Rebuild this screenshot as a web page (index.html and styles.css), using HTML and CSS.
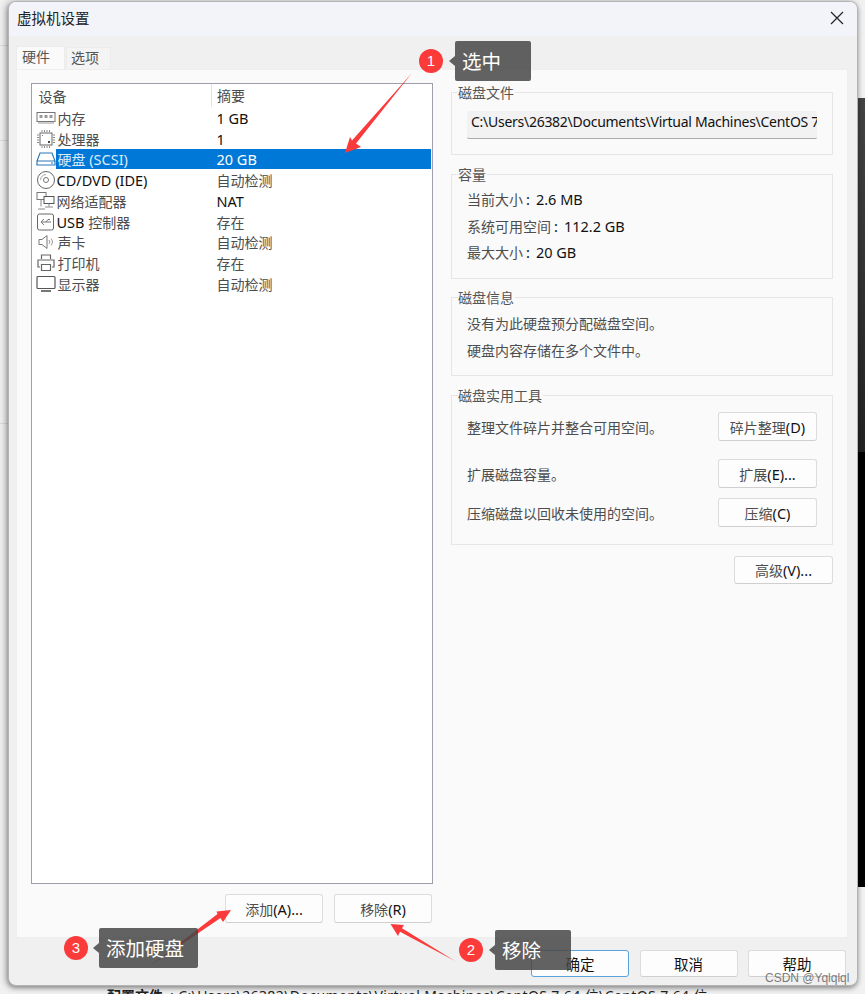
FILE: index.html
```html
<!DOCTYPE html>
<html lang="zh-CN">
<head>
<meta charset="utf-8">
<title>虚拟机设置</title>
<link rel="stylesheet" href="styles.css">
</head>
<body>
<div class="backdrop">
  <i class="bd-line bd-line-a"></i><i class="bd-line bd-line-b"></i><i class="bd-line bd-line-c"></i>
  <div class="bd-dark"></div>
  <div class="bd-text"><b>配置文件</b>: C:\Users\26382\Documents\Virtual Machines\CentOS 7 64 位\CentOS 7 64 位</div>
</div>

<div class="window">
  <header class="titlebar">
    <span class="title">虚拟机设置</span>
    <svg class="close" width="14" height="14" viewBox="0 0 14 14"><path d="M1 1l12 12M13 1L1 13" stroke="#222" stroke-width="1.2" fill="none"/></svg>
  </header>
  <nav class="tabs">
    <span class="tab tab-on">硬件</span>
    <span class="tab">选项</span>
  </nav>
  <main class="panel">
    <section class="left">
      <div class="list">
        <div class="row head"><span class="c1 hd1">设备</span><span class="c2 hd2">摘要</span></div>
        <div class="row">
          <svg class="ico" viewBox="0 0 20 16"><rect x="1" y="2.5" width="18" height="9" fill="none" stroke="#777"/><path d="M3.5 5h3v3h-3zM8.5 5h3v3h-3zM13.5 5h3v3h-3z" fill="#999"/><path d="M2 13h16" stroke="#999"/></svg>
          <span class="c1 zh">内存</span><span class="c2">1 GB</span>
        </div>
        <div class="row">
          <svg class="ico" viewBox="0 0 20 20"><rect x="4" y="4" width="12" height="12" fill="none" stroke="#666"/><path d="M6 1v2M8.500 1v2M11 1v2M13.500 1v2M6 17v2M8.500 17v2M11 17v2M13.500 17v2M1 6h2M1 8.500h2M1 11h2M1 13.500h2M17 6h2M17 8.500h2M17 11h2M17 13.500h2" stroke="#888"/><rect x="12" y="12" width="2" height="2" fill="#444"/><rect x="6" y="6" width="1" height="1" fill="#777"/></svg>
          <span class="c1 zh">处理器</span><span class="c2">1</span>
        </div>
        <div class="row sel">
          <svg class="ico" viewBox="0 0 20 16"><path d="M4 2h12l3 8v4H1v-4z M1 10h18" fill="none" stroke="#2b79b8" stroke-width="1.2"/><path d="M15 12h2" stroke="#2b79b8"/></svg>
          <span class="c1 hl"><span class="hz">硬盘</span> (SCSI)</span><span class="c2 hl2">20 GB</span>
        </div>
        <div class="row">
          <svg class="ico" viewBox="0 0 20 20"><circle cx="10" cy="10" r="8.500" fill="none" stroke="#666"/><circle cx="10" cy="10" r="2.500" fill="none" stroke="#777"/><path d="M4.500 10a5.500 5.500 0 0 1 5.500-5.500" stroke="#aaa" fill="none"/></svg>
          <span class="c1 tight">CD/DVD (IDE)</span><span class="c2 zh">自动检测</span>
        </div>
        <div class="row">
          <svg class="ico" viewBox="0 0 20 20"><rect x="1" y="1.500" width="9" height="7" fill="none" stroke="#777"/><rect x="8" y="5.500" width="10" height="7" fill="#fff" stroke="#555"/><path d="M13 12.500v3M9 16h8M5 8.500v7M2 18h7" stroke="#888" fill="none"/></svg>
          <span class="c1 zh tight">网络适配器</span><span class="c2">NAT</span>
        </div>
        <div class="row">
          <svg class="ico" viewBox="0 0 20 20"><rect x="1.500" y="2" width="16" height="16" rx="2" fill="none" stroke="#666"/><path d="M15 10H5l3-3M5 10l3 3M10 10l2-2.500h2" stroke="#777" fill="none"/></svg>
          <span class="c1 tight">USB <span class="zh">控制器</span></span><span class="c2 zh">存在</span>
        </div>
        <div class="row">
          <svg class="ico" viewBox="0 0 20 20"><path d="M3 7.500h3l5-4v13l-5-4H3z" fill="none" stroke="#777"/><path d="M13 8a3 3 0 0 1 0 4M15 6.500a5 5 0 0 1 0 7" stroke="#999" fill="none"/></svg>
          <span class="c1 zh">声卡</span><span class="c2 zh">自动检测</span>
        </div>
        <div class="row">
          <svg class="ico" viewBox="0 0 20 20"><path d="M5.500 6V2h9v4M4 14H2V7h16v7h-2M5.500 11.500h9v6h-9z" fill="none" stroke="#666" stroke-width="1.200"/></svg>
          <span class="c1 zh">打印机</span><span class="c2 zh">存在</span>
        </div>
        <div class="row">
          <svg class="ico" viewBox="0 0 20 20"><rect x="1" y="2.500" width="18" height="12" rx="1" fill="none" stroke="#555" stroke-width="1.200"/><path d="M5 17h10" stroke="#777" stroke-width="2"/></svg>
          <span class="c1 zh">显示器</span><span class="c2 zh">自动检测</span>
        </div>
      </div>
      <div class="list-actions">
        <button class="btn"><span class="zh">添加</span>(A)...</button>
        <button class="btn"><span class="zh">移除</span>(R)</button>
      </div>
    </section>

    <section class="right">
      <div class="group g-file">
        <div class="legend zh">磁盘文件</div>
        <div class="path"><span>C:\Users\26382\Documents\Virtual Machines\CentOS 7 64 位</span></div>
      </div>
      <div class="group g-cap">
        <div class="legend zh">容量</div>
        <div class="line"><span class="zh">当前大小</span><span class="colon">:</span>2.6 MB</div>
        <div class="line"><span class="zh">系统可用空间</span><span class="colon">:</span>112.2 GB</div>
        <div class="line"><span class="zh">最大大小</span><span class="colon">:</span>20 GB</div>
      </div>
      <div class="group g-info">
        <div class="legend zh">磁盘信息</div>
        <div class="line zh">没有为此硬盘预分配磁盘空间。</div>
        <div class="line zh">硬盘内容存储在多个文件中。</div>
      </div>
      <div class="group g-tools">
        <div class="legend zh">磁盘实用工具</div>
        <div class="tool t1"><span class="zh">整理文件碎片并整合可用空间。</span><button class="btn"><span class="zh">碎片整理</span>(D)</button></div>
        <div class="tool t2"><span class="zh">扩展磁盘容量。</span><button class="btn"><span class="zh">扩展</span>(E)...</button></div>
        <div class="tool t3"><span class="zh">压缩磁盘以回收未使用的空间。</span><button class="btn"><span class="zh">压缩</span>(C)</button></div>
      </div>
      <div class="adv"><button class="btn"><span class="zh">高级</span>(V)...</button></div>
    </section>
  </main>
  <footer class="footer">
    <button class="btn btn-foot btn-default zh">确定</button>
    <button class="btn btn-foot zh">取消</button>
    <button class="btn btn-foot zh">帮助</button>
  </footer>
</div>

<svg class="arrows" width="865" height="994" viewBox="0 0 865 994">
  <path d="M412 73L356 143.600L361 147L345 153L350 137L352 140.400Z" fill="#fb3b3b"/>
  <path d="M455 961L402 928.300L404 925L390.500 924L398 936L400 931.700Z" fill="#fb3b3b"/>
  <path d="M150 966L220.500 918L223 922L231 910L216.500 911.500L217.500 914Z" fill="#fb3b3b"/>
</svg>

<div class="note note-1"><span class="badge">1</span><span class="tag tag-s">选中</span></div>
<div class="note note-2"><span class="badge">2</span><span class="tag tag-s">移除</span></div>
<div class="note note-3"><span class="badge">3</span><span class="tag tag-l">添加硬盘</span></div>
<div class="watermark">CSDN @Yqlqlql</div>
</body>
</html>
```
FILE: styles.css
```css
* { box-sizing: border-box; }
html, body { margin: 0; padding: 0; }
body {
  width: 865px;
  height: 994px;
  position: relative;
  overflow: hidden;
  background: #f1f1f1;
  font-family: "Noto Sans", "Noto Sans CJK SC", sans-serif;
  font-size: 14.500px;
  color: #111;
}
.zh { color: #4d4d4d; font-family: "Noto Sans CJK SC", sans-serif; font-size: 14px; }
.colon { margin: 0 6px 0 3px; }

/* desktop behind the dialog */
.backdrop { position: absolute; inset: 0; }
.bd-line { position: absolute; left: 0; width: 12px; height: 1px; background: #ddd; }
.bd-line-a { top: 45px; }
.bd-line-b { top: 140px; }
.bd-line-c { top: 423px; }
.bd-dark {
  position: absolute; right: 0; top: 98px; width: 10px; height: 789px;
  background: linear-gradient(#444 0, #222 354px, #000 354px, #000 100%);
}
.bd-text {
  position: absolute; left: 107px; top: 985px;
  font-size: 14px; white-space: nowrap; color: #222; letter-spacing: .4px;
}
.bd-text b { font-family: "Noto Sans CJK SC", sans-serif; margin-right: 7px; letter-spacing: 0; }

/* dialog */
.window {
  position: relative;
  width: 850px;
  height: 985px;
  margin: 1px 0 0 7.500px;
  display: flex;
  flex-direction: column;
  background: #f0f0f0;
  border: 1px solid #b4b4b4;
  border-radius: 8px;
  box-shadow: -2px 1px 7px rgba(0,0,0,.32), 0 2px 4px rgba(0,0,0,.25);
  overflow: hidden;
}
.titlebar {
  flex: none;
  height: 34px;
  display: flex;
  align-items: center;
  justify-content: space-between;
  padding: 0 12.500px 3px 8.500px;
  background: #f3f4f9;
}
.title { font-family: "Noto Sans CJK SC", sans-serif; font-size: 14.500px; color: #222; }

.tabs { flex: none; height: 33px; display: flex; align-items: flex-end; padding-left: 7.500px; gap: 1px; }
.tab {
  width: 45px; height: 22px;
  display: flex; align-items: center; padding: 0 0 3px 4px;
  background: #f4f4f4;
  border: 1px solid #ececec; border-bottom: 0;
  font-family: "Noto Sans CJK SC", sans-serif; font-size: 14px; color: #555;
}
.tab-on { width: 49px; height: 23px; background: #fafafa; padding: 0 0 4px 5px; }

.panel {
  flex: none;
  height: 869px;
  margin: 0 9px 0 7.500px;
  padding: 13px 13px 0 14px;
  display: flex;
  background: #fafafa;
  border: 1px solid #eee;
}
.left { width: 402px; flex: none; }
.list {
  height: 801px;
  background: #fff;
  border: 1px solid #9e9fa8;
}
.row {
  height: 20.750px;
  display: flex;
  align-items: center;
  padding-left: 3.500px;
  white-space: nowrap;
  position: relative;
}
.head { height: 23.500px; }
.ico { width: 20px; height: 20px; flex: none; }
.c1 { width: 161px; flex: none; padding-left: 2px; }
.c1.tight { padding-left: 1px; }
.hd1, .hd2 { color: #4d4d4d; font-family: "Noto Sans CJK SC", sans-serif; font-size: 14px; }
.hd1 { padding-left: 3px; width: 175.500px; }
.hd2 { border-left: 1px solid #e4e4e4; padding-left: 5px; height: 23px; line-height: 23px; }
.sel .c1 { background: #0078d7; height: 20px; line-height: 20px; }
.sel .c2 { background: #0078d7; flex: 1; height: 20px; line-height: 20px; margin-right: 1px; }
.hl { color: #dceaf7; }
.hz { font-family: "Noto Sans CJK SC", sans-serif; font-size: 14px; }
.hl2 { color: #fff; }

.list-actions { display: flex; justify-content: flex-end; gap: 11px; margin-top: 10px; padding-right: 1px; }
.btn {
  width: 98px; height: 29px;
  padding: 0;
  background: #fdfdfd;
  border: 1px solid #dcdcdc;
  border-bottom-color: #cfcfcf;
  border-radius: 3px;
  font: inherit;
  color: #111;
}

.right { margin-left: 18px; width: 382px; flex: none; display: flex; flex-direction: column; padding-top: 9px; }
.group {
  border: 1px solid #e6e6e6;
  padding: 0 15px;
  flex: none;
}
.legend {
  width: fit-content;
  margin: -10px 0 0 -9px;
  padding: 0 1px 0 0;
  height: 19px;
  line-height: 19px;
  background: #fafafa;
  color: #555;
}
.g-file { height: 63px; }
.g-cap { height: 105px; margin-top: 19px; }
.g-info { height: 79px; margin-top: 18px; }
.g-tools { height: 150px; margin-top: 19px; }
.path {
  margin-top: 9px;
  height: 28px;
  padding: 0 4px;
  line-height: 22px;
  background: #f2f2f2;
  border-bottom: 1px solid #aaa;
  border-radius: 2px;
  overflow: hidden;
  white-space: nowrap;
  color: #111;
  font-size: 14px;
  letter-spacing: -.27px;
}
.line { height: 26.500px; line-height: 26.500px; white-space: nowrap; }
.g-cap .legend + .line { margin-top: 2px; }
.g-info .legend + .line { margin-top: 3px; }
.tool { display: flex; align-items: center; justify-content: space-between; }
.tool .btn { width: 99px; }
.t1 { margin-top: 7px; }
.t2 { margin-top: 18px; }
.t3 { margin-top: 10px; }
.adv { display: flex; justify-content: flex-end; margin-top: 11px; }
.adv .btn { height: 28px; width: 99px; }

.footer {
  flex: 1;
  display: flex;
  justify-content: flex-end;
  align-items: flex-start;
  gap: 10.500px;
  padding: 12px 10.500px 0 0;
}
.btn-foot { height: 27px; width: 98px; }
.btn-default { border: 1.500px solid #5aa2dc; }

/* annotations */
.arrows { position: absolute; left: 0; top: 0; pointer-events: none; }
.note { position: absolute; display: flex; align-items: center; }
.note-1 { left: 419px; top: 41px; }
.note-2 { left: 459px; top: 930px; }
.note-3 { left: 64px; top: 928px; }
.badge {
  width: 24px; height: 24px;
  border-radius: 50%;
  background: #fb3a3a;
  color: #fff;
  font: 15px/24px "Liberation Sans", sans-serif;
  text-align: center;
}
.tag {
  position: relative;
  height: 40px;
  margin-left: 12px;
  padding: 0 7px;
  border-radius: 2px;
  background: rgba(70,70,70,.85);
  color: #fff;
  font-family: "Noto Sans CJK SC", sans-serif;
  font-size: 19.500px;
  line-height: 40px;
  white-space: nowrap;
}
.tag-s { width: 76px; }
.tag-l { width: 99px; margin-left: 11px; }
.tag::before {
  content: "";
  position: absolute;
  left: -6px; top: 15px;
  border: 5px solid transparent;
  border-left: 0;
  border-right: 6px solid rgba(70,70,70,.85);
}
.watermark {
  position: absolute;
  left: 765px; top: 970px;
  font: 12px/16px "Liberation Sans", sans-serif;
  color: rgba(90,90,90,.8);
  white-space: nowrap;
}
```
